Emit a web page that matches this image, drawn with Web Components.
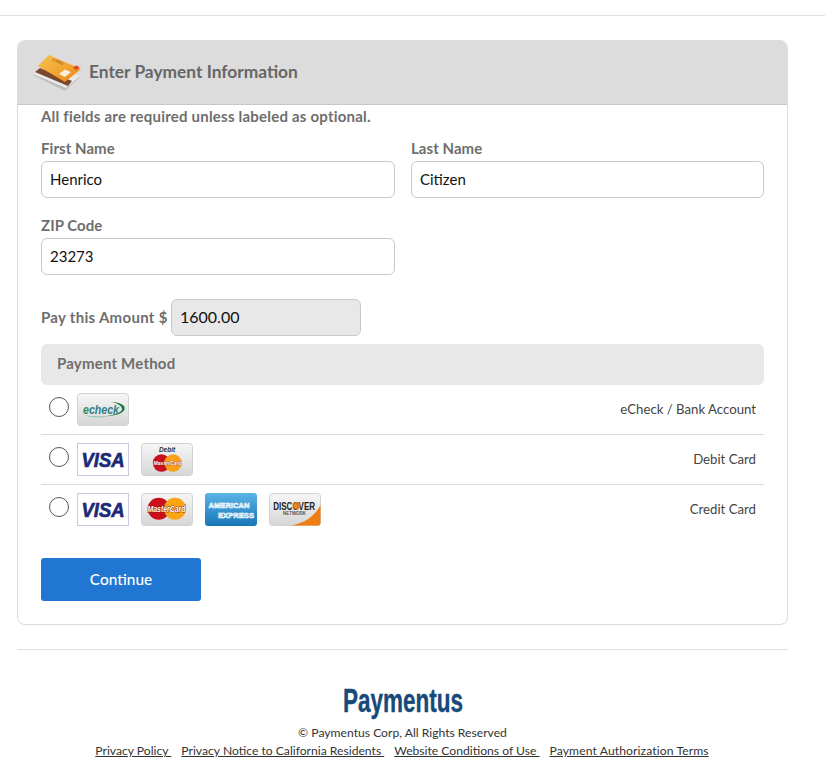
<!DOCTYPE html>
<html lang="en">
<head>
<meta charset="utf-8">
<title>Enter Payment Information</title>
<style>
  html, body { margin: 0; background: #fff; }
  body { font-family: Lato, "Open Sans", sans-serif; }
</style>
</head>
<body>
<pay-page>
  <pay-card heading="Enter Payment Information">
    <p slot="note">All fields are required unless labeled as optional.</p>
    <pay-grid>
      <pay-field label="First Name" value="Henrico"></pay-field>
      <pay-field label="Last Name" value="Citizen"></pay-field>
      <pay-field label="ZIP Code" value="23273"></pay-field>
    </pay-grid>
    <pay-amount label="Pay this Amount $" value="1600.00"></pay-amount>
    <pay-methods heading="Payment Method">
      <pay-method label="eCheck / Bank Account" logos="echeck"></pay-method>
      <pay-method label="Debit Card" logos="visa debit"></pay-method>
      <pay-method label="Credit Card" logos="visa mastercard amex discover"></pay-method>
    </pay-methods>
    <pay-button>Continue</pay-button>
  </pay-card>
  <pay-footer></pay-footer>
</pay-page>

<script>
class PayPage extends HTMLElement {
    constructor() {
        super();
        this.attachShadow({ mode: 'open' });
        this.shadowRoot.innerHTML = `
            <style>
                :host {
                    display: block;
                    padding-top: 15px;
                    color: #666;
                    font-family: Lato, "Open Sans", sans-serif;
                }
                .rule {
                    border-top: 1px solid #dfdfdf;
                    padding: 24px 37px 0 17px;
                }
            </style>
            <div class="rule"><slot></slot></div>
        `;
    }
}

class PayCard extends HTMLElement {
    constructor() {
        super();
        this.attachShadow({ mode: 'open' });
        this.shadowRoot.innerHTML = `
            <style>
                :host {
                    display: block;
                    box-sizing: border-box;
                    width: 771px;
                    border: 1px solid #dcdcdc;
                    border-radius: 8px;
                    box-shadow: 0 0 1px rgba(0, 0, 0, 0.08);
                }
                header {
                    display: flex;
                    align-items: center;
                    gap: 8px;
                    height: 64px;
                    box-sizing: border-box;
                    padding: 0 0 3px 15px;
                    background: #dcdcdc;
                    border-bottom: 1px solid #c6c8c8;
                    border-radius: 7px 7px 0 0;
                }
                h1 {
                    margin: 0;
                    font-size: 17.35px;
                    font-weight: 700;
                    color: #666;
                }
                .body {
                    padding: 0 23px 23px;
                }
                ::slotted(p) {
                    margin: 0;
                    height: 23px;
                    line-height: 22px;
                    font-size: 15px;
                    font-weight: 700;
                    letter-spacing: 0.21px;
                    color: #6e6e6e;
                }
            </style>
            <header>
                <svg width="48" height="42" viewBox="0 0 48 42" aria-hidden="true">
                    <defs>
                        <linearGradient id="gold" x1="0" y1="0" x2="1" y2="1">
                            <stop offset="0" stop-color="#f6c050"/>
                            <stop offset=".55" stop-color="#f2a530"/>
                            <stop offset="1" stop-color="#e88416"/>
                        </linearGradient>
                    </defs>
                    <path d="M0 25 L11 15 L47 27 L32 41 Z" fill="#bdbdbd"/>
                    <path d="M0 24 L11 14 L47 26 L33 38 Z" fill="#e9e9e9"/>
                    <path d="M2 22 L7 18 L39 31 L35 36 Z" fill="#7a4630"/>
                    <path d="M5 16 L16 5 L48 19 L32 32 Z" fill="url(#gold)"/>
                    <text x="0" y="0" transform="translate(19 10.500) rotate(24)" font-family="Liberation Sans" font-weight="700" font-size="4" fill="#a8691a">CARD</text>
                    <path d="M40 18 L43 15.500 L46.500 17 L43.500 20 Z" fill="#e2402a"/>
                    <path d="M26 24 L32 19.500 L38 22 L32 27 Z" fill="#fbeedd"/>
                </svg>
                <h1></h1>
            </header>
            <div class="body">
                <slot name="note"></slot>
                <slot></slot>
            </div>
        `;
        this.shadowRoot.querySelector('h1').textContent = this.getAttribute('heading');
    }
}

class PayGrid extends HTMLElement {
    constructor() {
        super();
        this.attachShadow({ mode: 'open' });
        this.shadowRoot.innerHTML = `
            <style>
                :host {
                    display: grid;
                    grid-template-columns: 354px 353px;
                    column-gap: 16px;
                    row-gap: 16px;
                    padding-top: 9px;
                }
            </style>
            <slot></slot>
        `;
    }
}

const FIELD_BOX = `
    input {
        box-sizing: border-box;
        height: 37px;
        padding: 0 8px 2px;
        border: 1px solid #c9c9c9;
        border-radius: 6px;
        outline: none;
        font: 400 15px Lato, "Open Sans", sans-serif;
        color: #111;
        background: #fff;
    }
`;

class PayField extends HTMLElement {
    constructor() {
        super();
        this.attachShadow({ mode: 'open' });
        this.shadowRoot.innerHTML = `
            <style>
                :host { display: block; }
                label {
                    display: block;
                    height: 24px;
                    line-height: 22px;
                    font-size: 15px;
                    font-weight: 700;
                    letter-spacing: 0.05px;
                    color: #6e6e6e;
                }
                ${FIELD_BOX}
                input { width: 100%; }
            </style>
            <label for="f"></label>
            <input id="f" type="text">
        `;
        this.shadowRoot.querySelector('label').textContent = this.getAttribute('label');
        this.shadowRoot.querySelector('input').setAttribute('value', this.getAttribute('value'));
    }
}

class PayAmount extends HTMLElement {
    constructor() {
        super();
        this.attachShadow({ mode: 'open' });
        this.shadowRoot.innerHTML = `
            <style>
                :host {
                    display: flex;
                    align-items: center;
                    gap: 3px;
                    padding: 24px 0 8px;
                }
                label {
                    width: 127px;
                    padding-bottom: 2px;
                    font-size: 15px;
                    font-weight: 700;
                    letter-spacing: 0.3px;
                    color: #6e6e6e;
                    white-space: nowrap;
                }
                ${FIELD_BOX}
                input {
                    width: 190px;
                    background: #e8e8e8;
                    font-size: 16px;
                }
            </style>
            <label for="a"></label>
            <input id="a" type="text" readonly>
        `;
        this.shadowRoot.querySelector('label').textContent = this.getAttribute('label');
        this.shadowRoot.querySelector('input').setAttribute('value', this.getAttribute('value'));
    }
}

class PayMethods extends HTMLElement {
    constructor() {
        super();
        this.attachShadow({ mode: 'open' });
        this.shadowRoot.innerHTML = `
            <style>
                :host { display: block; }
                h2 {
                    margin: 0;
                    height: 41px;
                    line-height: 38px;
                    padding-left: 16px;
                    background: #e8e8e8;
                    border-radius: 6px;
                    font-size: 15px;
                    font-weight: 700;
                    letter-spacing: 0.2px;
                    color: #6e6e6e;
                }
            </style>
            <h2></h2>
            <slot></slot>
        `;
        this.shadowRoot.querySelector('h2').textContent = this.getAttribute('heading');
    }
}

class PayMethod extends HTMLElement {
    constructor() {
        super();
        this.attachShadow({ mode: 'open' });
        this.shadowRoot.innerHTML = `
            <style>
                :host {
                    display: flex;
                    box-sizing: border-box;
                    height: 50px;
                    align-items: flex-start;
                    padding: 8px 8px 0 8px;
                    border-bottom: 1px solid #d9d9d9;
                }
                :host(:last-child) { border-bottom: none; }
                input {
                    appearance: none;
                    box-sizing: border-box;
                    width: 20px;
                    height: 20px;
                    margin: 4px 8px 0 0;
                    border: 1px solid #555;
                    border-radius: 50%;
                    background: #fff;
                }
                .logos { display: flex; gap: 12px; }
                span {
                    margin-left: auto;
                    padding-top: 8px;
                    font-size: 13.2px;
                    color: #444;
                }
            </style>
            <input type="radio" name="method">
            <div class="logos"></div>
            <span></span>
        `;
        this.shadowRoot.querySelector('span').textContent = this.getAttribute('label');
        const logos = this.shadowRoot.querySelector('.logos');
        this.getAttribute('logos').split(' ').forEach(type => {
            const logo = document.createElement('pay-logo');
            logo.setAttribute('type', type);
            logos.appendChild(logo);
        });
    }
}

// 52x33 card marks, hand drawn
const LOGO_DEFS = `
    <linearGradient id="grey" x1="0" y1="0" x2="0" y2="1">
        <stop offset="0" stop-color="#f6f6f6"/><stop offset="1" stop-color="#d6d6d6"/>
    </linearGradient>
    <linearGradient id="blue" x1="0" y1="0" x2="0" y2="1">
        <stop offset="0" stop-color="#5cb4e6"/><stop offset="1" stop-color="#1576b8"/>
    </linearGradient>
`;
const GREY_BOX = '<rect x=".5" y=".5" width="51" height="32" rx="3" fill="url(#grey)" stroke="#d2d2d2"/>';
const BOLD = 'font-family="Liberation Sans" font-weight="700"';

const LOGOS = {
    echeck: `${GREY_BOX}
        <path d="M34 9 C44 9 49 13 47.500 16.500 C46 20 40 22.500 30 23 C40 21 45 19 45 16 C45 13 40 10 34 9 Z" fill="#1f7a45"/>
        <path d="M7 22 C16 24 26 24 34 22.500 C26 25 15 25 7 22 Z" fill="#6fb98a"/>
        <text x="6" y="20.500" ${BOLD} font-style="italic" font-size="12" textLength="36" lengthAdjust="spacingAndGlyphs" fill="#2f7f8a"><tspan fill="#2f8f52">e</tspan>check</text>`,
    visa: `<rect x=".5" y=".5" width="51" height="32" fill="#fff" stroke="#c9c9e0"/>
        <text x="4.500" y="24" ${BOLD} font-style="italic" font-size="20" textLength="43" lengthAdjust="spacingAndGlyphs" fill="#1d2a75" stroke="#1d2a75" stroke-width=".7">VISA</text>`,
    debit: `${GREY_BOX}
        <text x="26" y="8.500" text-anchor="middle" ${BOLD} font-style="italic" font-size="6.500" fill="#333">Debit</text>
        <circle cx="20.500" cy="20" r="8.700" fill="#c8101e"/>
        <circle cx="32" cy="20" r="8.700" fill="#f7a11a"/>
        <text x="12.500" y="22" ${BOLD} font-style="italic" font-size="6" textLength="28" lengthAdjust="spacingAndGlyphs" fill="#fff" stroke="#8a1a10" stroke-width=".5" paint-order="stroke">MasterCard</text>`,
    mastercard: `${GREY_BOX}
        <circle cx="17.700" cy="15.800" r="11" fill="#cc0f1d"/>
        <circle cx="34" cy="15.800" r="11" fill="#f9a516"/>
        <text x="6.500" y="19" ${BOLD} font-style="italic" font-size="8.500" textLength="38" lengthAdjust="spacingAndGlyphs" fill="#fff" stroke="#8a1a10" stroke-width=".8" paint-order="stroke">MasterCard</text>`,
    amex: `<rect width="52" height="33" rx="3" fill="url(#blue)"/>
        <text x="3.500" y="15" ${BOLD} font-size="8" textLength="41" lengthAdjust="spacingAndGlyphs" fill="#7cc4ee" stroke="#fff" stroke-width=".6">AMERICAN</text>
        <text x="13" y="24.500" ${BOLD} font-size="8" textLength="36" lengthAdjust="spacingAndGlyphs" fill="#6cb8e6" stroke="#fff" stroke-width=".6">EXPRESS</text>`,
    discover: `${GREY_BOX}
        <path d="M22 32.500 C36 30 46 23 51.500 12 V30 A2.500 2.500 0 0 1 49 32.500 Z" fill="#f07c14"/>
        <text transform="translate(4.300 16.500) scale(.8 1)" ${BOLD} font-size="10" fill="#222">DISCOVER</text>
        <circle cx="27.700" cy="12.800" r="3.700" fill="#f07c14" opacity=".85"/>
        <text x="14" y="22" ${BOLD} font-size="4.500" textLength="23" lengthAdjust="spacingAndGlyphs" fill="#555">NETWORK</text>`
};

class PayLogo extends HTMLElement {
    constructor() {
        super();
        this.attachShadow({ mode: 'open' });
    }

    connectedCallback() {
        const type = this.getAttribute('type');
        this.shadowRoot.innerHTML = `
            <style>
                :host { display: block; width: 52px; height: 33px; }
                svg { display: block; }
            </style>
            <svg width="52" height="33" viewBox="0 0 52 33" role="img" aria-label="${type}">
                <defs>${LOGO_DEFS}</defs>
                ${LOGOS[type]}
            </svg>
        `;
    }
}

class PayButton extends HTMLElement {
    constructor() {
        super();
        this.attachShadow({ mode: 'open' });
        this.shadowRoot.innerHTML = `
            <style>
                :host { display: block; padding-top: 23px; }
                button {
                    display: block;
                    width: 160px;
                    height: 43px;
                    padding: 0 0 2px;
                    border: none;
                    border-radius: 3px;
                    background: #2176d2;
                    color: #fff;
                    font: 500 15.4px Lato, "Open Sans", sans-serif;
                    cursor: pointer;
                }
            </style>
            <button type="button"><slot></slot></button>
        `;
    }
}

class PayFooter extends HTMLElement {
    constructor() {
        super();
        this.attachShadow({ mode: 'open' });
        this.shadowRoot.innerHTML = `
            <style>
                :host {
                    display: block;
                    width: 771px;
                    margin-top: 24px;
                    border-top: 1px solid #dfdfdf;
                    text-align: center;
                    font-size: 12.15px;
                    color: #333;
                }
                svg { display: block; margin: 33px auto 0; }
                p { margin: 0; line-height: 19px; }
                .copy { margin-top: 3px; }
                nav {
                    display: flex;
                    justify-content: center;
                    gap: 10px;
                    line-height: 18px;
                    padding-right: 1px;
                }
                a { color: #333; text-decoration: underline; }
                a:last-child { letter-spacing: 0.1px; }
            </style>
            <svg width="130" height="37" viewBox="0 0 130 37">
                <text transform="translate(5 29) scale(.682 1)" font-family="Liberation Sans" font-weight="700" font-size="33" fill="#174a78" stroke="#174a78" stroke-width=".4">Paymentus</text>
            </svg>
            <p class="copy">© Paymentus Corp, All Rights Reserved</p>
            <nav>
                <a href="#">Privacy Policy&nbsp;</a>
                <a href="#">Privacy Notice to California Residents&nbsp;</a>
                <a href="#">Website Conditions of Use&nbsp;</a>
                <a href="#">Payment Authorization Terms</a>
            </nav>
        `;
    }
}

customElements.define('pay-page', PayPage);
customElements.define('pay-card', PayCard);
customElements.define('pay-grid', PayGrid);
customElements.define('pay-field', PayField);
customElements.define('pay-amount', PayAmount);
customElements.define('pay-methods', PayMethods);
customElements.define('pay-method', PayMethod);
customElements.define('pay-logo', PayLogo);
customElements.define('pay-button', PayButton);
customElements.define('pay-footer', PayFooter);
</script>
</body>
</html>
